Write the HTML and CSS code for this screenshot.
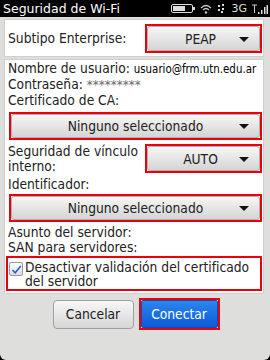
FILE: index.html
```html
<!DOCTYPE html>
<html lang="es">
<head>
  <meta charset="UTF-8">
  <title>Seguridad de Wi-Fi</title>
  <link rel="stylesheet" href="styles.css">
</head>
<body>
  <div class="statusbar">
    <span class="title">Seguridad de Wi-Fi</span>
    <div class="icons">
      <svg width="24" height="9" viewBox="0 0 24 9">
        <rect x="0.5" y="0.5" width="21" height="8" rx="1.5" fill="none" stroke="#ddd"/>
        <rect x="2" y="2" width="12" height="5" fill="#ddd"/>
        <rect x="22" y="3" width="2" height="3" fill="#ddd"/>
      </svg>
      <svg width="12" height="10" viewBox="0 0 12 10">
        <path d="M1 4 Q6 -1 11 4" fill="none" stroke="#ccc" stroke-width="1.2"/>
        <path d="M3 6 Q6 3 9 6" fill="none" stroke="#ccc" stroke-width="1.2"/>
        <circle cx="6" cy="8.5" r="1.2" fill="#ccc"/>
      </svg>
      <svg width="9" height="9" viewBox="0 0 9 9">
        <rect x="1" y="1" width="2" height="2" fill="#ddd"/>
        <rect x="5" y="0" width="2" height="2" fill="#ddd"/>
        <rect x="1" y="5" width="2" height="2" fill="#ddd"/>
        <rect x="5" y="4" width="2" height="2" fill="#ddd"/>
        <rect x="4" y="7" width="2" height="2" fill="#ddd"/>
      </svg>
      <span class="net">3G</span>
      <svg width="16" height="10" viewBox="0 0 16 10">
        <path d="M0 1 H5 M2.5 1 V9" stroke="#ccc" stroke-width="1"/>
        <rect x="6" y="8" width="1.5" height="2" fill="#ddd"/>
        <rect x="9" y="6" width="1.5" height="4" fill="#ddd"/>
        <rect x="12" y="3" width="1.5" height="7" fill="#ddd"/>
        <rect x="14.5" y="1" width="1.5" height="9" fill="#ddd"/>
      </svg>
    </div>
  </div>

  <div class="screen">
    <div class="panel top">
      <div class="row">
        <span class="label">Subtipo Enterprise:</span>
        <div class="mark small">
          <div class="select">PEAP<span class="arrow"></span></div>
        </div>
      </div>
    </div>

    <div class="panel main">
      <div class="line">Nombre de usuario: <span class="value">usuario@frm.utn.edu.ar</span></div>
      <div class="line">Contraseña: <span class="stars">*********</span></div>
      <div class="line">Certificado de CA:</div>
      <div class="mark wide first">
        <div class="select">Ninguno seleccionado<span class="arrow"></span></div>
      </div>
      <div class="row two">
        <span class="label">Seguridad de vínculo<br>interno:</span>
        <div class="mark small">
          <div class="select">AUTO<span class="arrow"></span></div>
        </div>
      </div>
      <div class="line after-row">Identificador:</div>
      <div class="mark wide second">
        <div class="select">Ninguno seleccionado<span class="arrow"></span></div>
      </div>
      <div class="line after-select">Asunto del servidor:</div>
      <div class="line">SAN para servidores:</div>
      <div class="mark check">
        <span class="box">
          <svg width="11" height="11" viewBox="0 0 11 11"><path d="M1.5 6 L4.2 8.8 L9.8 2" fill="none" stroke="#1c64d0" stroke-width="1.5"/></svg>
        </span>
        <span class="checktext">Desactivar validación del certificado del servidor</span>
      </div>
    </div>

    <div class="buttons">
      <button class="btn">Cancelar</button>
      <div class="mark btnmark"><button class="btn primary">Conectar</button></div>
    </div>
  </div>
</body>
</html>
```

FILE: styles.css
```css
body {
  margin: 0;
  width: 270px;
  height: 360px;
  overflow: hidden;
  background: #000;
  font-family: "DejaVu Sans Condensed", "DejaVu Sans", sans-serif;
  color: #222;
}

.statusbar {
  height: 17px;
  display: flex;
  align-items: center;
  justify-content: space-between;
  padding: 0 2px 0 3px;
  color: #fff;
  font-family: "DejaVu Sans", sans-serif;
}

.title {
  font-size: 12.5px;
}

.icons {
  display: flex;
  align-items: center;
  gap: 5px;
}

.net {
  font-size: 11px;
  color: #ddd;
}

.screen {
  height: 343px;
  background: #dededc;
  border-radius: 0 0 6px 6px;
  padding: 2px 6px 0 4px;
  box-sizing: border-box;
}

.panel {
  background: #fff;
  border: 1px solid #cfcfcd;
  padding: 0 1px 0 3px;
}

.panel.top {
  height: 38px;
  box-sizing: border-box;
  display: flex;
  align-items: center;
  padding-top: 1px;
  margin-bottom: 2px;
}

.panel.main {
  padding-top: 1px;
  padding-bottom: 2px;
}

.row {
  display: flex;
  align-items: center;
  justify-content: space-between;
  flex: 1;
}

.label {
  font-size: 13.7px;
  line-height: 15px;
}

.row.two {
  margin-top: 4px;
  align-items: flex-start;
}

.line {
  font-size: 13.7px;
  line-height: 15px;
  white-space: nowrap;
}

.line.after-row {
  margin-top: 3px;
}

.line.after-select {
  margin-top: 3px;
}

.value {
  font-size: 11.4px;
  color: #000;
}

.stars {
  font-family: "DejaVu Sans", sans-serif;
  font-size: 12px;
  color: #666;
}

.mark {
  border: 2px solid #e8000a;
  box-sizing: border-box;
}

.mark.small {
  width: 117px;
  height: 29px;
}

.mark.wide {
  height: 28px;
  margin-left: 1px;
}

.mark.wide.first {
  margin-top: 4px;
}

.mark.wide.second {
  margin-top: 2px;
}

.select {
  height: 100%;
  box-sizing: border-box;
  border: 1px solid #b0b0b0;
  border-radius: 3px;
  background: linear-gradient(#f6f6f6, #d5d5d5);
  font-size: 13.7px;
  display: flex;
  align-items: center;
  justify-content: center;
  position: relative;
  color: #222;
}

.mark.small .select {
  padding-right: 6px;
}

.arrow {
  position: absolute;
  right: 10px;
  top: 50%;
  margin-top: -2px;
  border-left: 5px solid transparent;
  border-right: 5px solid transparent;
  border-top: 5px solid #111;
}

.mark.check {
  display: flex;
  align-items: flex-start;
  gap: 2px;
  margin: 1px 0 0 -2px;
  padding: 2px 3px 1px 1px;
}

.box {
  width: 12px;
  height: 12px;
  border: 1px solid #999;
  border-radius: 2px;
  background: linear-gradient(#fff, #ddd);
  margin-top: 2px;
  display: flex;
  align-items: center;
  justify-content: center;
  flex-shrink: 0;
}

.checktext {
  font-size: 13.7px;
  line-height: 14px;
}

.buttons {
  display: flex;
  justify-content: center;
  align-items: center;
  gap: 5px;
  margin-top: 4px;
  padding-left: 4px;
}

.btn {
  font-family: "DejaVu Sans Condensed", "DejaVu Sans", sans-serif;
  font-size: 13.7px;
  width: 81px;
  height: 29px;
  border: 1px solid #a0a0a0;
  border-radius: 4px;
  background: linear-gradient(#f7f7f7, #d6d6d6);
  color: #222;
}

.mark.btnmark {
  padding: 0;
}

.btn.primary {
  width: 77px;
  height: 28px;
  border: 1px solid #0d4fb8;
  border-radius: 2px;
  background: linear-gradient(#2a86ec, #0c5ad8);
  color: #fff;
}
```
